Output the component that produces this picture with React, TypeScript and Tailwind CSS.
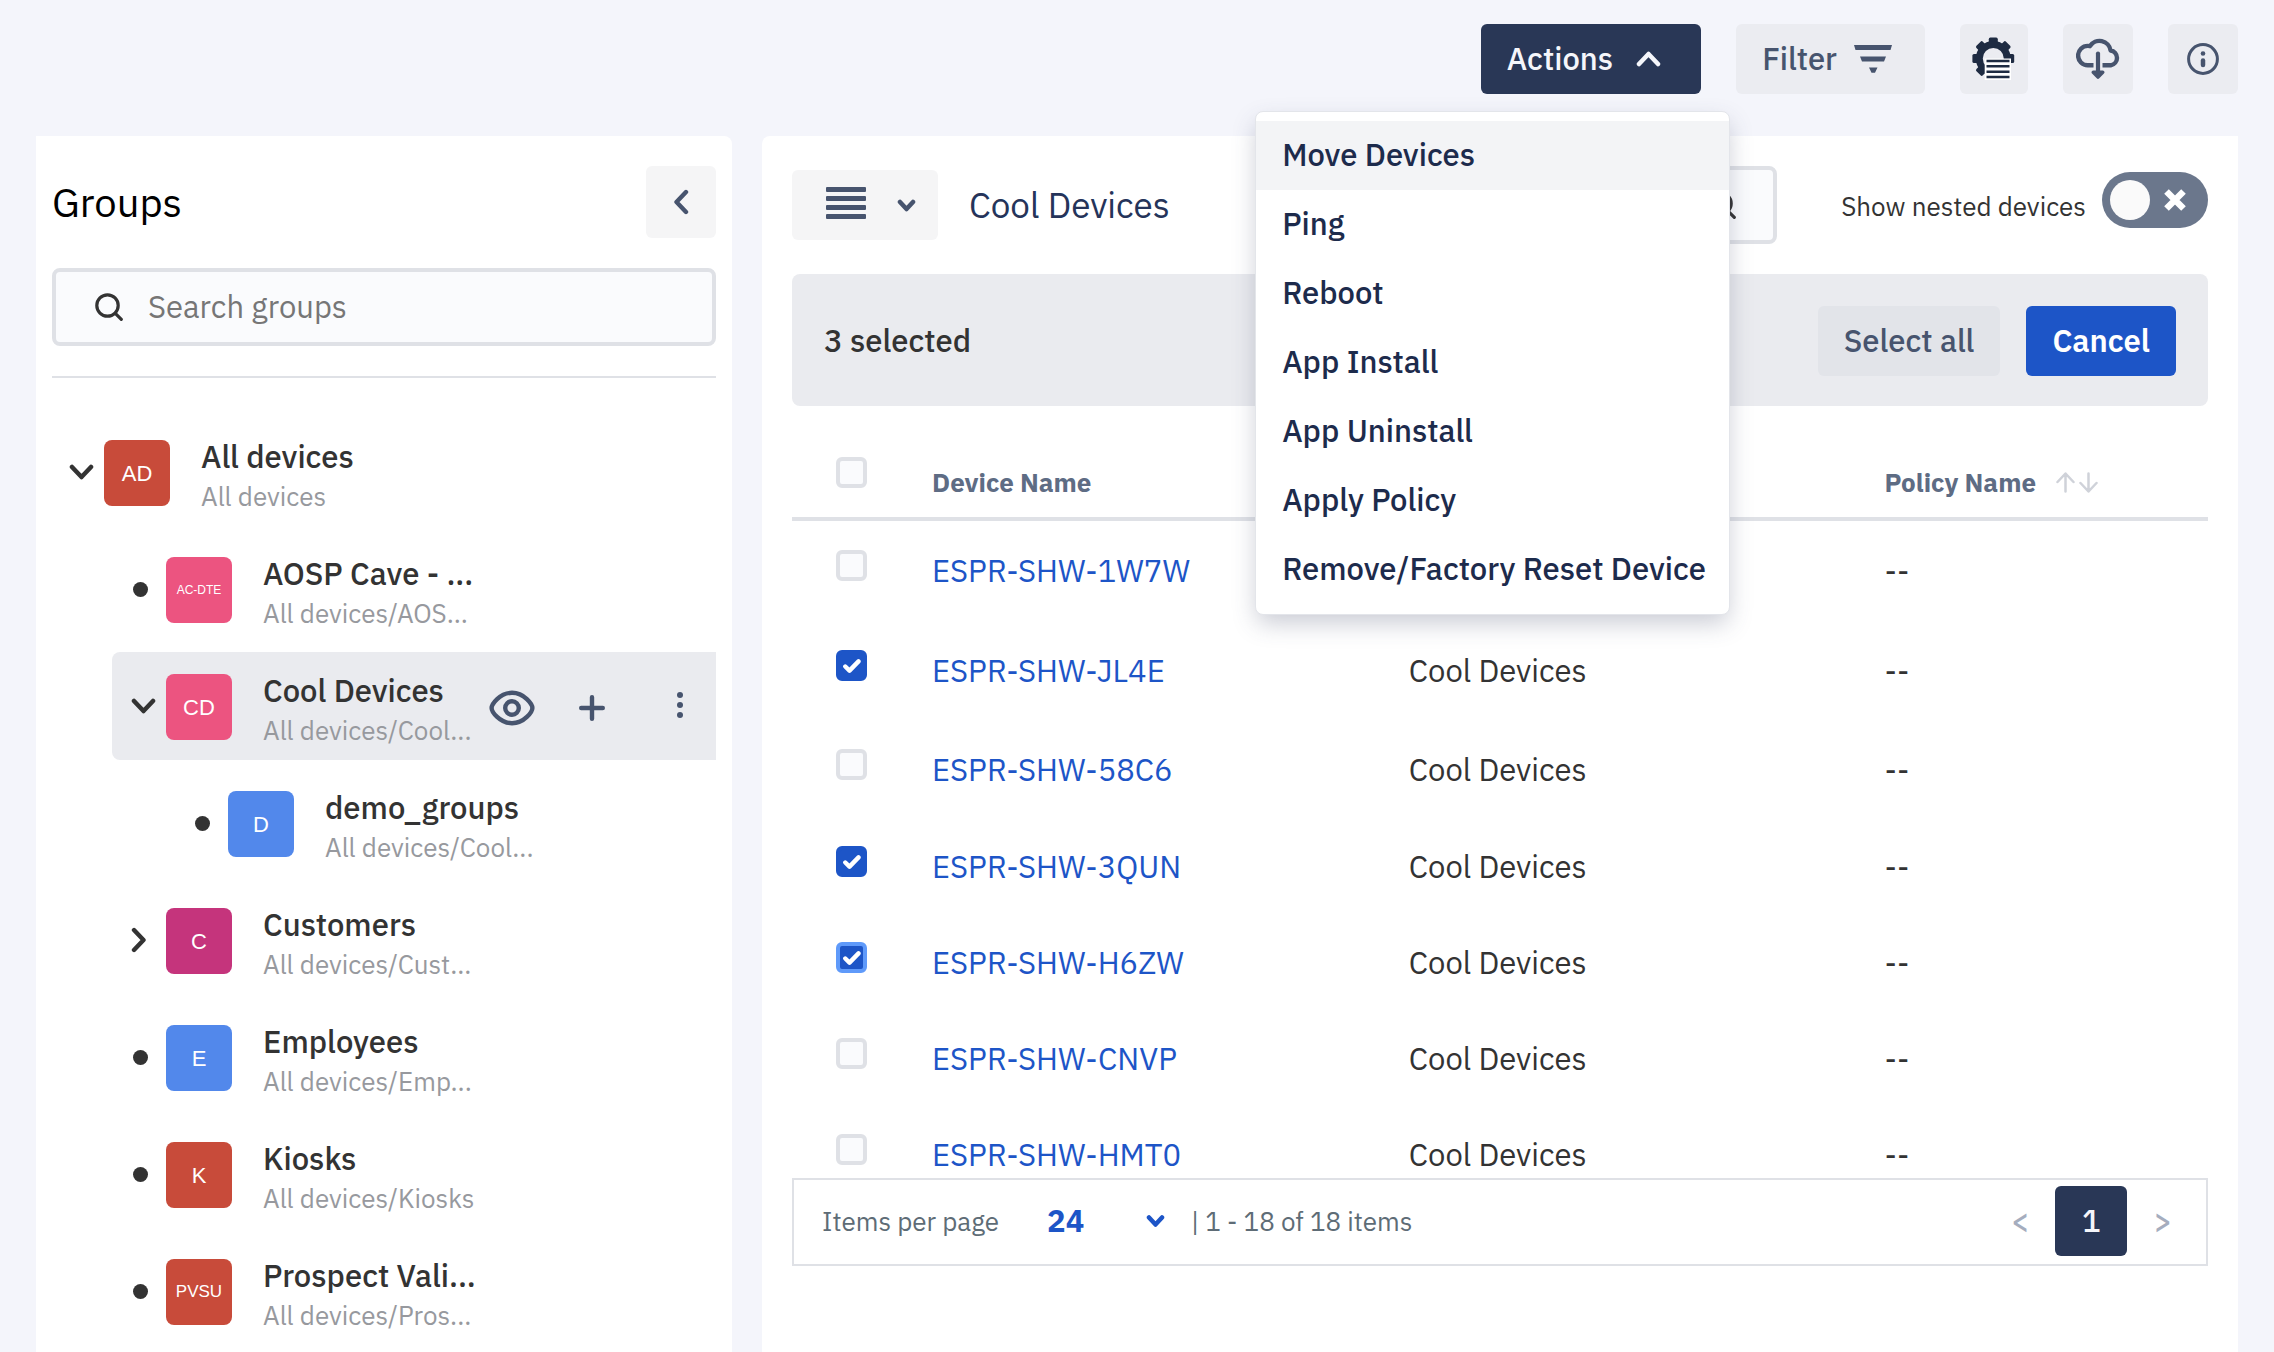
import React, { useState } from "react";

type Group = {
  name: string;
  path: string;
  initials: string;
  level: 0 | 1 | 2;
  marker: "open" | "closed" | "leaf";
  color: string;
  initialsSize: string;
  selected?: boolean;
};

const groups: Group[] = [
  { name: "All devices", path: "All devices", initials: "AD", level: 0, marker: "open", color: "bg-[#c84b3a]", initialsSize: "text-[22px]" },
  { name: "AOSP Cave - ...", path: "All devices/AOS...", initials: "AC-DTE", level: 1, marker: "leaf", color: "bg-[#ec5480]", initialsSize: "text-[12px]" },
  { name: "Cool Devices", path: "All devices/Cool...", initials: "CD", level: 1, marker: "open", color: "bg-[#ec5480]", initialsSize: "text-[22px]", selected: true },
  { name: "demo_groups", path: "All devices/Cool...", initials: "D", level: 2, marker: "leaf", color: "bg-[#5288eb]", initialsSize: "text-[22px]" },
  { name: "Customers", path: "All devices/Cust...", initials: "C", level: 1, marker: "closed", color: "bg-[#c5347c]", initialsSize: "text-[22px]" },
  { name: "Employees", path: "All devices/Emp...", initials: "E", level: 1, marker: "leaf", color: "bg-[#5288eb]", initialsSize: "text-[22px]" },
  { name: "Kiosks", path: "All devices/Kiosks", initials: "K", level: 1, marker: "leaf", color: "bg-[#c84b3a]", initialsSize: "text-[22px]" },
  { name: "Prospect Vali...", path: "All devices/Pros...", initials: "PVSU", level: 1, marker: "leaf", color: "bg-[#c84b3a]", initialsSize: "text-[17px]" },
];

const indent = { 0: "ml-0", 1: "ml-[62px]", 2: "ml-[124px]" };

const devices = [
  { name: "ESPR-SHW-1W7W", group: "", checked: false, height: "h-[102px]" },
  { name: "ESPR-SHW-JL4E", group: "Cool Devices", checked: true, height: "h-[100px]" },
  { name: "ESPR-SHW-58C6", group: "Cool Devices", checked: false, height: "h-[98px]" },
  { name: "ESPR-SHW-3QUN", group: "Cool Devices", checked: true, height: "h-[96px]" },
  { name: "ESPR-SHW-H6ZW", group: "Cool Devices", checked: true, height: "h-[96px]", focused: true },
  { name: "ESPR-SHW-CNVP", group: "Cool Devices", checked: false, height: "h-[96px]" },
  { name: "ESPR-SHW-HMT0", group: "Cool Devices", checked: false, height: "h-[96px]" },
];

const actions = ["Move Devices", "Ping", "Reboot", "App Install", "App Uninstall", "Apply Policy", "Remove/Factory Reset Device"];

const chevrons = {
  up: "M3 14 12.5 4 22 14",
  down: "M3 4 12.5 14 22 4",
};

function Chevron({ dir, className }: { dir: "up" | "down"; className: string }) {
  return (
    <svg viewBox="0 0 25 18" className={className} fill="none" stroke="currentColor" strokeWidth="4.5" strokeLinecap="round" strokeLinejoin="round" aria-hidden="true">
      <path d={chevrons[dir]} />
    </svg>
  );
}

function SmallChevron({ className }: { className: string }) {
  return (
    <svg viewBox="0 0 19 15" className={className} fill="none" stroke="currentColor" strokeWidth="4.5" strokeLinecap="round" strokeLinejoin="round" aria-hidden="true">
      <path d="m3 4 6.500 7L16 4" />
    </svg>
  );
}

function SideChevron({ dir, className }: { dir: "left" | "right"; className: string }) {
  return (
    <svg viewBox="0 0 16 26" className={className} fill="none" stroke="currentColor" strokeWidth="4.4" strokeLinecap="round" strokeLinejoin="round" aria-hidden="true">
      <path d={dir === "left" ? "M13 3 3.5 13 13 23" : "M3 3 12.5 13 3 23"} />
    </svg>
  );
}

function SearchIcon({ className }: { className: string }) {
  return (
    <svg viewBox="0 0 28 28" className={className} fill="none" stroke="currentColor" strokeWidth="3.2" strokeLinecap="round" aria-hidden="true">
      <circle cx="12.5" cy="12.5" r="10.7" />
      <path d="m20.3 20.3 6 6" />
    </svg>
  );
}

function GearListIcon() {
  return (
    <svg viewBox="0 0 44 44" className="size-11 shrink-0" aria-hidden="true">
      <g fill="#1e2b42">
        {[0, 45, 90, 135, 180, 225, 270, 315].map((a) => (
          <rect key={a} x="16.8" y="0.6" width="9" height="9" rx="1.6" transform={`rotate(${a} 21.3 21.5)`} />
        ))}
      </g>
      <circle cx="21.3" cy="21.5" r="14" fill="none" stroke="#1e2b42" strokeWidth="7" />
      <rect x="12.7" y="21.5" width="26.3" height="21.5" fill="#fff" />
      <path d="M14.5 24h23M14.5 29.3h23M14.5 34.7h23M14.5 40h23" stroke="#1e2b42" strokeWidth="2.4" />
    </svg>
  );
}

function CloudDownIcon() {
  return (
    <svg viewBox="0 0 44 42" className="h-[42px] w-11 shrink-0" fill="none" stroke="currentColor" strokeWidth="4.4" strokeLinejoin="round" aria-hidden="true">
      <path d="M17.5 27.3H11.8A9.7 9.7 0 0 1 11.8 7.9q1 0 2.2.3A11.2 11.2 0 0 1 34.6 12.5 7.5 7.5 0 0 1 34.8 27.3H26.5" />
      <path d="M22 15.5V36" strokeWidth="4.2" strokeLinecap="round" />
      <path d="m17.3 34.3 4.7 4.7 4.7-4.7z" fill="currentColor" strokeWidth="3.6" />
    </svg>
  );
}

function Tick({ checked, focused, label }: { checked: boolean; focused?: boolean; label: string }) {
  const [on, setOn] = useState(checked);
  return (
    <label className="inline-grid align-middle">
      <input
        type="checkbox"
        aria-label={label}
        checked={on}
        onChange={(e) => setOn(e.target.checked)}
        className={
          "col-start-1 row-start-1 size-[31px] appearance-none rounded-md border-4 " +
          (on ? (focused ? "border-[#5f9afa] bg-[#1d55c7]" : "border-[#1d55c7] bg-[#1d55c7]") : "border-[#dfe1e6] bg-[#fafbfd]")
        }
      />
      {on && (
        <svg viewBox="0 0 18 14" className="pointer-events-none col-start-1 row-start-1 h-[14px] w-[18px] place-self-center" fill="none" stroke="#fff" strokeWidth="4.400" strokeLinecap="round" strokeLinejoin="round" aria-hidden="true">
          <path d="m2.3 7.5 4.2 4.1 9-9.2" />
        </svg>
      )}
    </label>
  );
}

function GroupRow({ group }: { group: Group }) {
  return (
    <li className={"flex h-[108px] items-start " + indent[group.level] + (group.selected ? " rounded-l-lg bg-[#eaebef]" : "")}>
      <div className="mt-[21px] flex h-[66px] w-[54px] shrink-0 items-center justify-center text-[#333]">
        {group.marker === "open" && <Chevron dir="down" className="ml-2 h-[18px] w-[25px]" />}
        {group.marker === "closed" && <SideChevron dir="right" className="h-[26px] w-4" />}
        {group.marker === "leaf" && <span className="ml-0.5 size-[15px] rounded-full bg-[#333]" />}
      </div>
      <div className={"mt-[22px] flex size-[66px] shrink-0 items-center justify-center rounded-lg font-['Liberation_Sans',Arial,sans-serif] text-white " + group.color + " " + group.initialsSize}>
        {group.initials}
      </div>
      <div className="ml-[31px] pt-[19px] whitespace-nowrap">
        <div className="text-[31px] leading-[39px] font-medium text-[#333]">{group.name}</div>
        <div className="text-[26px] leading-10 text-[#97999e]">{group.path}</div>
      </div>
      {group.selected && (
        <div className="mt-[37px] mr-[33px] ml-auto flex h-[38px] items-center text-[#47546e]">
          <button type="button" aria-label="View group" className="mr-11">
            <svg viewBox="0 0 46 36" className="h-9 w-[46px]" fill="none" stroke="currentColor" strokeWidth="4.4" aria-hidden="true">
              <path d="M2.6 18C2.6 14.5 10.5 2.8 23 2.8S43.4 14.5 43.4 18 35.500 33.200 23 33.200 2.600 21.500 2.600 18z" />
              <circle cx="23" cy="18" r="6.800" />
            </svg>
          </button>
          <button type="button" aria-label="Add group" className="mr-[72px]">
            <svg viewBox="0 0 26 26" className="size-[26px]" stroke="currentColor" strokeWidth="4.4" strokeLinecap="round" aria-hidden="true">
              <path d="M13 2.200v21.600M2.200 13h21.600" />
            </svg>
          </button>
          <button type="button" aria-label="More options">
            <svg viewBox="0 0 6 32" className="h-8 w-[6px]" fill="currentColor" aria-hidden="true">
              <circle cx="3" cy="3" r="3" />
              <circle cx="3" cy="13" r="3" />
              <circle cx="3" cy="23" r="3" />
            </svg>
          </button>
        </div>
      )}
    </li>
  );
}

function TopBar() {
  return (
    <header className="flex shrink-0 items-center justify-end gap-[35px] px-9 pt-6 pb-[42px]">
      <div className="relative">
        <button type="button" aria-expanded="true" className="flex h-[70px] items-center gap-[23px] rounded-md bg-[#293756] pr-10 pl-[26px] text-[31px] font-medium text-[#f5f6fb]">
          Actions
          <Chevron dir="up" className="h-[18px] w-[25px]" />
        </button>
        <div role="menu" className="absolute top-full -right-[29px] z-10 mt-[17px] w-[475px] rounded-lg border border-[#e3e5ea] bg-white pt-[9px] pb-[10px] shadow-[0_10px_24px_-2px_rgba(60,70,100,0.28)]">
          {actions.map((a, i) => (
            <button key={a} type="button" role="menuitem" className={"block h-[69px] w-full pl-[26px] text-left text-[31px] font-medium whitespace-nowrap text-[#1d2b4c]" + (i === 0 ? " bg-[#f3f4f6]" : "")}>
              {a}
            </button>
          ))}
        </div>
      </div>
      <button type="button" className="flex h-[70px] items-center gap-[17px] rounded-md bg-[#ebecf1] pr-[33px] pl-[26px] text-[31px] font-medium text-[#47546e]">
        Filter
        <svg viewBox="0 0 38 28" className="h-7 w-[38px]" fill="currentColor" aria-hidden="true">
          <path d="M0 0H38L36.500 5H1.500zM6 11.500H32L30 16.500H8zM15 22.500H23.500L21 27.700H17.500z" />
        </svg>
      </button>
      <button type="button" aria-label="Device settings" className="flex h-[70px] w-[68px] items-center justify-center rounded-md bg-[#ebecf1]">
        <GearListIcon />
      </button>
      <button type="button" aria-label="Download" className="flex h-[70px] w-[70px] items-center justify-center rounded-md bg-[#ebecf1] text-[#47546e]">
        <CloudDownIcon />
      </button>
      <button type="button" aria-label="Information" className="flex h-[70px] w-[70px] items-center justify-center rounded-md bg-[#ebecf1] text-[#47546e]">
        <svg viewBox="0 0 32 32" className="size-8" fill="none" stroke="currentColor" strokeWidth="3" strokeLinecap="round" aria-hidden="true">
          <circle cx="16" cy="16" r="14.400" />
          <path d="M16 17.500v4.500" strokeWidth="4.500" />
          <circle cx="16" cy="10.500" r="2.300" fill="currentColor" stroke="none" />
        </svg>
      </button>
    </header>
  );
}

function GroupsPanel() {
  return (
    <aside className="flex w-[696px] shrink-0 flex-col overflow-hidden rounded-tr-lg bg-white px-4 pt-[30px]">
      <div className="flex items-center justify-between">
        <h2 className="text-[40px] leading-[72px] text-black">Groups</h2>
        <button type="button" aria-label="Collapse groups" className="flex h-[72px] w-[70px] items-center justify-center rounded-md bg-[#f5f5f6] text-[#47546e]">
          <SideChevron dir="left" className="h-[26px] w-4" />
        </button>
      </div>
      <label className="mt-[30px] flex h-[78px] shrink-0 items-center rounded-lg border-4 border-[#dfe1e6] bg-[#fafbfd] pl-[39px]">
        <SearchIcon className="size-7 shrink-0 text-[#333]" />
        <input type="text" aria-label="Search groups" placeholder="Search groups" className="ml-[25px] min-w-0 flex-1 bg-transparent text-[31px] outline-none placeholder:text-[#767676]" />
      </label>
      <hr className="mt-[30px] border-t-2 border-[#dfe1e6]" />
      <ul className="mt-10 -ml-0.5 flex flex-col gap-[9px]">
        {groups.map((g) => (
          <GroupRow key={g.name} group={g} />
        ))}
      </ul>
    </aside>
  );
}

function DeviceTable() {
  return (
    <div className="min-h-0 flex-1 overflow-hidden">
      <table className="w-full table-fixed border-collapse text-left text-[31px] text-[#333]">
        <colgroup>
          <col className="w-[7.7%]" />
          <col className="w-[33.6%]" />
          <col className="w-[33.6%]" />
          <col />
        </colgroup>
        <thead>
          <tr className="h-[113px] border-b-4 border-[#dfe1e6] align-bottom text-[26px] leading-9 text-[#5e6c84]">
            <th className="pb-[29px] pl-11 leading-none">
              <Tick checked={false} label="Select every device" />
            </th>
            <th className="pb-[17px] pl-[31px] font-bold">Device Name</th>
            <th aria-label="Group" className="pb-[17px] pl-8 font-bold" />
            <th className="pb-[17px] pl-8 font-bold">
              <span className="flex items-center gap-5">
                Policy Name
                <svg viewBox="0 0 42 21" className="h-[21px] w-[42px]" fill="none" stroke="#cfd2d9" strokeWidth="2.500" strokeLinecap="round" strokeLinejoin="round" aria-hidden="true">
                  <path d="M9.500 19.500V2M1.500 10 9.500 1.500 17.500 10M32.500 1.500V19M24.500 11l8 8.500 8-8.500" />
                </svg>
              </span>
            </th>
          </tr>
        </thead>
        <tbody>
          {devices.map((d) => (
            <tr key={d.name} className={d.height}>
              <td className="pb-[14px] pl-11 leading-none">
                <Tick checked={d.checked} focused={d.focused} label={"Select " + d.name} />
              </td>
              <td className="pl-[31px]">
                <a href="#device" className="text-[#1d55c7]">{d.name}</a>
              </td>
              <td className="pl-8">{d.group}</td>
              <td className="pl-8">--</td>
            </tr>
          ))}
        </tbody>
      </table>
    </div>
  );
}

function DevicesPanel() {
  const [nested, setNested] = useState(false);
  return (
    <main className="flex min-w-0 flex-1 flex-col rounded-tl-lg bg-white px-[30px] pt-[30px] pb-[86px]">
      <div className="flex h-[78px] shrink-0 items-center">
        <button type="button" aria-label="List view" className="flex h-[70px] w-[146px] items-center rounded-md bg-[#f5f5f6] pl-[34px] text-[#47546e]">
          <svg viewBox="0 0 40 32" className="mb-1 h-8 w-10" fill="currentColor" aria-hidden="true">
            <rect width="40" height="5" rx="1" />
            <rect y="9" width="40" height="5" rx="1" />
            <rect y="18" width="40" height="5" rx="1" />
            <rect y="27" width="40" height="5" rx="1" />
          </svg>
          <SmallChevron className="ml-[31px] h-[15px] w-[19px]" />
        </button>
        <h1 className="ml-[31px] flex-1 text-[35px] text-[#25345a]">Cool Devices</h1>
        <label className="flex h-[78px] w-[480px] items-center rounded-lg border-4 border-[#dfe1e6] bg-[#fafbfd] pr-[37px] pl-6">
          <input type="text" aria-label="Search devices" className="min-w-0 flex-1 bg-transparent text-[31px] outline-none" />
          <SearchIcon className="size-7 shrink-0 text-[#333]" />
        </label>
        <label htmlFor="nested" className="ml-[64px] pt-0.5 text-[26px] whitespace-nowrap text-[#333]">
          Show nested devices
        </label>
        <div className="mt-[6px] ml-4 grid self-start">
          <input
            id="nested"
            type="checkbox"
            role="switch"
            checked={nested}
            onChange={(e) => setNested(e.target.checked)}
            className="col-start-1 row-start-1 h-14 w-[106px] appearance-none rounded-full bg-[#6b778c] p-2 before:block before:size-10 before:rounded-full before:bg-[#fafafa] checked:bg-[#1d55c7] checked:before:ml-auto"
          />
          {!nested && (
            <svg viewBox="0 0 22 22" className="pointer-events-none col-start-1 row-start-1 mr-[22px] size-[22px] self-center justify-self-end" stroke="#fff" strokeWidth="6.500" aria-hidden="true">
              <path d="m2.500 2.500 17 17m0-17-17 17" />
            </svg>
          )}
        </div>
      </div>
      <div className="mt-[30px] flex h-[132px] shrink-0 items-center rounded-lg bg-[#eaebef] px-8 pt-0.5">
        <span className="flex-1 text-[31px] font-medium text-[#333]">3 selected</span>
        <button type="button" className="h-[70px] rounded-md bg-[#e2e4e9] px-[26px] text-[31px] font-medium text-[#47546e]">Select all</button>
        <button type="button" className="ml-[26px] h-[70px] rounded-md bg-[#1d55c7] px-[26px] text-[31px] font-semibold text-white">Cancel</button>
      </div>
      <DeviceTable />
      <footer className="flex h-[88px] shrink-0 items-center border-2 border-[#dfe1e6] pr-[34px] pb-0.5 pl-7 text-[26px] text-[#5e6c76]">
        <label htmlFor="per-page">Items per page</label>
        <div className="relative ml-12">
          <select id="per-page" defaultValue="24" className="h-14 w-[118px] appearance-none bg-transparent text-[31px] font-bold text-[#1d55c7] outline-none">
            <option>12</option>
            <option>24</option>
            <option>48</option>
          </select>
          <SmallChevron className="pointer-events-none absolute top-1/2 right-0 h-[15px] w-[19px] -translate-y-1/2 text-[#1d55c7]" />
        </div>
        <span className="ml-[26px] flex-1">| 1 - 18 of 18 items</span>
        <nav aria-label="Pages" className="flex items-center gap-[26px] text-[31px] font-medium text-[#a5adbe]">
          <button type="button" aria-label="Previous page">&lt;</button>
          <button type="button" aria-current="page" className="h-[70px] w-[72px] rounded-md bg-[#293756] text-[#f5f6fb]">1</button>
          <button type="button" aria-label="Next page">&gt;</button>
        </nav>
      </footer>
    </main>
  );
}

export default function App() {
  return (
    <div className="flex h-screen flex-col overflow-hidden bg-[#f4f5fb] font-['IBM_Plex_Sans',Roboto,sans-serif]">
      <TopBar />
      <div className="flex min-h-0 flex-1 gap-[30px] px-9">
        <GroupsPanel />
        <DevicesPanel />
      </div>
    </div>
  );
}
